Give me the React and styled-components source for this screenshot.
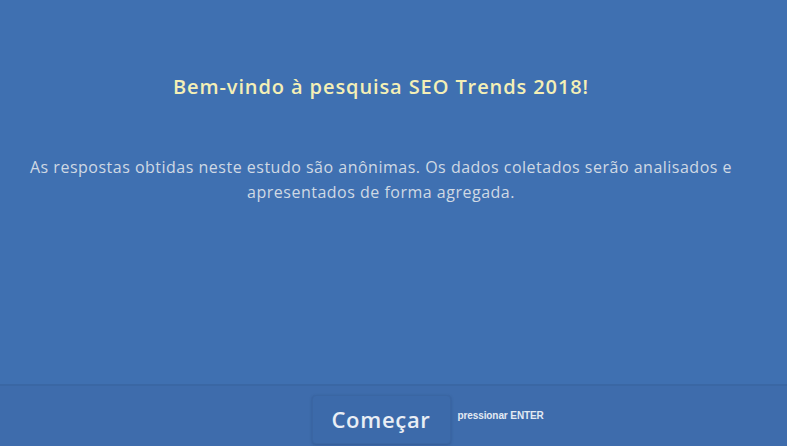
import React from 'react';
import styled, { createGlobalStyle } from 'styled-components';

const GlobalStyle = createGlobalStyle`
  html, body {
    margin: 0;
    padding: 0;
    height: 100%;
    background: #3f70b1;
    font-family: "Open Sans", "Noto Sans", sans-serif;
    overflow: hidden;
  }
  #root {
    height: 100%;
  }
`;

const Page = styled.div`
  height: 446px;
  display: flex;
  flex-direction: column;
  background: #3f70b1;
`;

const Content = styled.main`
  flex: 1;
  display: flex;
  flex-direction: column;
  align-items: center;
  padding: 73px 25px 0 0;
  text-align: center;
`;

const Title = styled.h1`
  margin: 0;
  font-size: 20px;
  font-weight: 600;
  line-height: 28px;
  color: #f4efb6;
  letter-spacing: 0.9px;
`;

const Intro = styled.p`
  margin: 54px 0 0;
  font-size: 16px;
  line-height: 25px;
  color: #cfd9e4;
  max-width: 740px;
  letter-spacing: 0.5px;
`;

const Footer = styled.footer`
  height: 60px;
  border-top: 2px solid #3a67a4;
  background: #3e6cac;
  display: flex;
  justify-content: center;
  align-items: center;
  padding-right: 25px;
`;

const ButtonWrap = styled.div`
  position: relative;
  margin-top: 6px;
`;

const StartButton = styled.button`
  width: 139px;
  height: 49px;
  border: 1px solid #3a66a3;
  border-radius: 4px;
  background: #3c6aaa;
  box-shadow: 0 1px 3px rgba(20, 40, 80, 0.25);
  color: #e9eef5;
  font-family: "Open Sans", "Noto Sans", sans-serif;
  font-size: 22px;
  font-weight: 600;
  cursor: pointer;
  letter-spacing: 0.7px;
`;

const Hint = styled.span`
  position: absolute;
  left: calc(100% + 7px);
  top: 15px;
  white-space: nowrap;
  font-family: "Liberation Sans", Arial, sans-serif;
  font-size: 10px;
  font-weight: 700;
  color: #e3eaf3;
  letter-spacing: -0.1px;
`;

export default function App() {
  return (
    <>
      <GlobalStyle />
      <Page>
        <Content>
          <Title>Bem-vindo à pesquisa SEO Trends 2018!</Title>
          <Intro>
            As respostas obtidas neste estudo são anônimas. Os dados coletados serão analisados e
            apresentados de forma agregada.
          </Intro>
        </Content>
        <Footer>
          <ButtonWrap>
            <StartButton type="button">Começar</StartButton>
            <Hint>pressionar ENTER</Hint>
          </ButtonWrap>
        </Footer>
      </Page>
    </>
  );
}
